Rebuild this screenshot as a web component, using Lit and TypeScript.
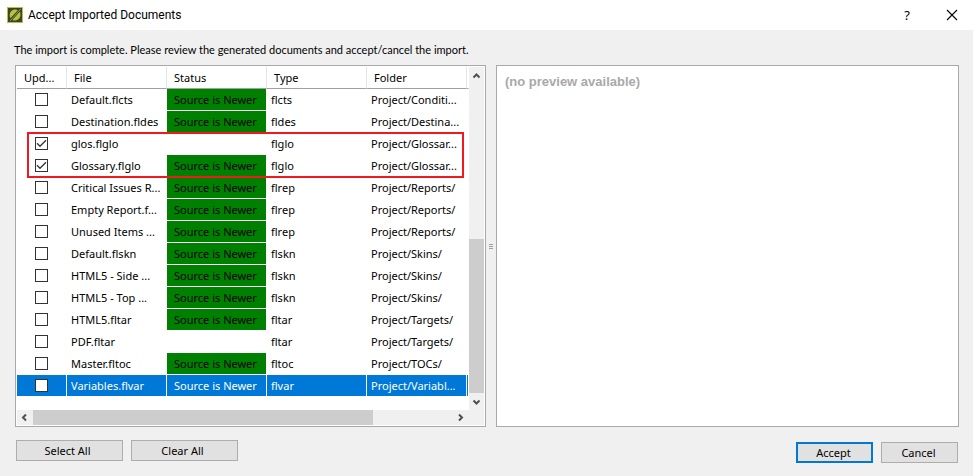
import { LitElement, html, css, svg, nothing } from "lit";
import { customElement, property, state } from "lit/decorators.js";
import { classMap } from "lit/directives/class-map.js";

interface DocRow {
  file: string;
  type: string;
  folder: string;
  newer: boolean;
  checked?: boolean;
  selected?: boolean;
}

const ROWS: DocRow[] = [
  { file: "Default.flcts", type: "flcts", folder: "Project/Conditi...", newer: true },
  { file: "Destination.fldes", type: "fldes", folder: "Project/Destina...", newer: true },
  { file: "glos.flglo", type: "flglo", folder: "Project/Glossar...", newer: false, checked: true },
  { file: "Glossary.flglo", type: "flglo", folder: "Project/Glossar...", newer: true, checked: true },
  { file: "Critical Issues R...", type: "flrep", folder: "Project/Reports/", newer: true },
  { file: "Empty Report.f...", type: "flrep", folder: "Project/Reports/", newer: true },
  { file: "Unused Items ...", type: "flrep", folder: "Project/Reports/", newer: true },
  { file: "Default.flskn", type: "flskn", folder: "Project/Skins/", newer: true },
  { file: "HTML5 - Side ...", type: "flskn", folder: "Project/Skins/", newer: true },
  { file: "HTML5 - Top ...", type: "flskn", folder: "Project/Skins/", newer: true },
  { file: "HTML5.fltar", type: "fltar", folder: "Project/Targets/", newer: true },
  { file: "PDF.fltar", type: "fltar", folder: "Project/Targets/", newer: false },
  { file: "Master.fltoc", type: "fltoc", folder: "Project/TOCs/", newer: true },
  { file: "Variables.flvar", type: "flvar", folder: "Project/Variabl...", newer: true, selected: true },
];

const chevrons = {
  up: "M4.5 9.5 L7.5 6.5 L10.5 9.5",
  down: "M4.5 6.5 L7.5 9.5 L10.5 6.5",
  left: "M9 4.5 L6 7.5 L9 10.5",
  right: "M6 4.5 L9 7.5 L6 10.5",
};

const chevron = (dir: keyof typeof chevrons) => html`
  <svg width="15" height="15" viewBox="0 0 15 15" aria-hidden="true">
    ${svg`<path d=${chevrons[dir]} fill="none" stroke="#505050" stroke-width="2"></path>`}
  </svg>
`;

@customElement("document-table")
export class DocumentTable extends LitElement {
  @property({ attribute: false }) rows: DocRow[] = [];

  static styles = css`
    :host {
      display: grid;
      grid-template-columns: minmax(0, 1fr) 15px;
      grid-template-rows: minmax(0, 1fr) 15px;
      box-sizing: border-box;
      border: 1px solid #a9a9a9;
      padding: 1px;
      background: #fff;
    }
    .body {
      position: relative;
      overflow: hidden;
    }
    table {
      width: 100%;
      table-layout: fixed;
      border-collapse: separate;
      border-spacing: 0;
    }
    .c-check {
      width: 50px;
    }
    .c-text {
      width: 100px;
    }
    th,
    td {
      box-sizing: border-box;
      height: 22px;
      padding: 0 4px;
      line-height: 20px;
      text-align: left;
      font-weight: 400;
      white-space: nowrap;
      overflow: hidden;
      border-right: 1px solid #fff;
      border-bottom: 1px solid #fff;
    }
    th {
      padding: 0 7px;
      border-right-color: #e5e5e5;
      border-bottom-color: #a0a0a0;
    }
    th:last-child,
    td:last-child {
      padding: 0;
      border-right-color: #fff;
    }
    td.status {
      padding: 0 7px;
    }
    td.newer {
      background: #008000;
      background-clip: padding-box;
    }
    tr.selected td {
      background: #0078d7;
      background-clip: padding-box;
      color: #fff;
    }
    .tick {
      display: grid;
      width: 13px;
      margin-left: 14px;
    }
    .tick input,
    .tick svg {
      grid-area: 1 / 1;
    }
    .tick input {
      appearance: none;
      box-sizing: border-box;
      width: 13px;
      height: 13px;
      margin: 0;
      border: 1px solid #333;
      background: #fff;
    }
    .tick svg {
      pointer-events: none;
      visibility: hidden;
    }
    .tick input:checked + svg {
      visibility: visible;
    }
    .marker {
      position: absolute;
      box-sizing: border-box;
      left: 10px;
      right: 5px;
      top: 65px;
      height: 46px;
      border: 2px solid #f0191e;
      pointer-events: none;
    }
    .bar {
      display: flex;
      background: #f0f0f0;
    }
    .bar.v {
      flex-direction: column;
    }
    .bar button {
      flex: none;
      display: flex;
      align-items: center;
      padding: 0;
      border: 0;
      background: none;
    }
    .v button {
      height: 17px;
    }
    .h button {
      width: 16px;
    }
    .track {
      flex: 1;
      display: flex;
    }
    .v .track {
      flex-direction: column;
      justify-content: flex-end;
    }
    .thumb {
      background: #cdcdcd;
    }
    .v .thumb {
      height: 50%;
    }
    .h .thumb {
      width: 81%;
    }
    .corner {
      background: #f0f0f0;
    }
  `;

  render() {
    return html`
      <div class="body">
        <table>
          <colgroup>
            <col class="c-check" />
            <col class="c-text" />
            <col class="c-text" />
            <col class="c-text" />
            <col class="c-text" />
            <col />
          </colgroup>
          <thead>
            <tr>
              <th>Upd...</th>
              <th>File</th>
              <th>Status</th>
              <th>Type</th>
              <th>Folder</th>
              <th></th>
            </tr>
          </thead>
          <tbody>
            ${this.rows.map((r) => this.row(r))}
          </tbody>
        </table>
        <div class="marker"></div>
      </div>
      <div class="bar v">
        <button aria-label="Scroll up">${chevron("up")}</button>
        <div class="track"><div class="thumb"></div></div>
        <button aria-label="Scroll down">${chevron("down")}</button>
      </div>
      <div class="bar h">
        <button aria-label="Scroll left">${chevron("left")}</button>
        <div class="track"><div class="thumb"></div></div>
        <button aria-label="Scroll right">${chevron("right")}</button>
      </div>
      <div class="corner"></div>
    `;
  }

  private row(r: DocRow) {
    return html`
      <tr class=${classMap({ selected: !!r.selected })}>
        <td>
          <label class="tick">
            <input type="checkbox" aria-label=${r.file} .checked=${!!r.checked} />
            <svg width="13" height="13" viewBox="0 0 13 13" aria-hidden="true">
              <path d="M2 6.3 L5 9.3 L11 3.3" fill="none" stroke="#333" stroke-width="1.3"></path>
            </svg>
          </label>
        </td>
        <td>${r.file}</td>
        <td class=${classMap({ status: true, newer: r.newer })}>${r.newer ? "Source is Newer" : nothing}</td>
        <td>${r.type}</td>
        <td>${r.folder}</td>
        <td></td>
      </tr>
    `;
  }
}

@customElement("app-root")
export class AppRoot extends LitElement {
  @state() private rows = ROWS;

  static styles = css`
    :host {
      display: flex;
      flex-direction: column;
      box-sizing: border-box;
      min-height: 100vh;
      background: #f0f0f0;
      color: #000;
      font: 11px/16px "Noto Sans", "Open Sans", sans-serif;
    }
    .titlebar {
      display: flex;
      align-items: center;
      height: 30px;
      padding: 0 13px 0 7px;
      background: #fff;
    }
    .logo {
      flex: none;
      margin-right: 5px;
    }
    h1 {
      flex: 1;
      margin: 0;
      font: 12px/16px Roboto, sans-serif;
    }
    .titlebar button {
      display: grid;
      place-items: center;
      width: 16px;
      height: 20px;
      padding: 0;
      border: 0;
      background: none;
      font: 13px/20px "Noto Sans", sans-serif;
      color: #000;
    }
    .titlebar .help {
      margin-right: 29px;
    }
    .message {
      margin: 0;
      padding: 12px 14px 7px;
      font-family: Lato, sans-serif;
    }
    .panes {
      flex: 1;
      display: grid;
      grid-template-columns: 471fr 10px 463fr;
      margin: 0 14px 0 15px;
    }
    .splitter {
      display: flex;
      flex-direction: column;
      align-items: center;
      justify-content: center;
      gap: 1px;
    }
    .splitter span {
      width: 4px;
      height: 1px;
      background: #a0a0a0;
    }
    .preview {
      border: 1px solid #a9a9a9;
      background: #fff;
      padding: 8px;
      font: bold 13px/16px "Liberation Sans", Arial, sans-serif;
      color: #a9a9a9;
    }
    .actions {
      display: flex;
      gap: 8px;
      padding: 13px 15px 13px 16px;
    }
    .actions button {
      box-sizing: border-box;
      width: 107px;
      height: 21px;
      padding: 0 4px 0 0;
      border: 1px solid #adadad;
      background: #e1e1e1;
      font: inherit;
      line-height: 18px;
      color: #000;
    }
    .spacer {
      flex: 1;
    }
    .actions .dialog {
      width: 77px;
      margin-top: 2px;
      padding-right: 2px;
    }
    .actions .primary {
      border: 2px solid #0078d7;
      line-height: 16px;
    }
  `;

  render() {
    return html`
      <header class="titlebar">
        <svg class="logo" width="16" height="16" viewBox="0 0 16 16" aria-hidden="true">
          <rect width="16" height="16" fill="#b5c72e"></rect>
          <rect x="1" y="1" width="14" height="14" fill="#3d3f3a"></rect>
          <path d="M3.4 11.2 C1.6 8 3.2 3.4 7.2 2.6 C8.6 2.3 9.8 2.6 10.8 3.2 Z" fill="#b5c72e"></path>
          <path d="M5.4 12.9 L12.8 4.8 C14.2 7.6 13.4 11.6 10.2 13 C8.6 13.7 6.8 13.6 5.4 12.9 Z" fill="#b5c72e"></path>
          <path d="M3 14 L13.6 2" stroke="#b5c72e" stroke-width="0.7"></path>
        </svg>
        <h1>Accept Imported Documents</h1>
        <button class="help" aria-label="Help">?</button>
        <button aria-label="Close">
          <svg width="12" height="12" viewBox="0 0 12 12" aria-hidden="true">
            <path d="M1 1 L11 11 M11 1 L1 11" stroke="#000" stroke-width="1.1"></path>
          </svg>
        </button>
      </header>
      <p class="message">
        The import is complete. Please review the generated documents and accept/cancel the import.
      </p>
      <main class="panes">
        <document-table .rows=${this.rows}></document-table>
        <div class="splitter"><span></span><span></span><span></span></div>
        <section class="preview">(no preview available)</section>
      </main>
      <footer class="actions">
        <button>Select All</button>
        <button>Clear All</button>
        <span class="spacer"></span>
        <button class="dialog primary">Accept</button>
        <button class="dialog">Cancel</button>
      </footer>
    `;
  }
}
